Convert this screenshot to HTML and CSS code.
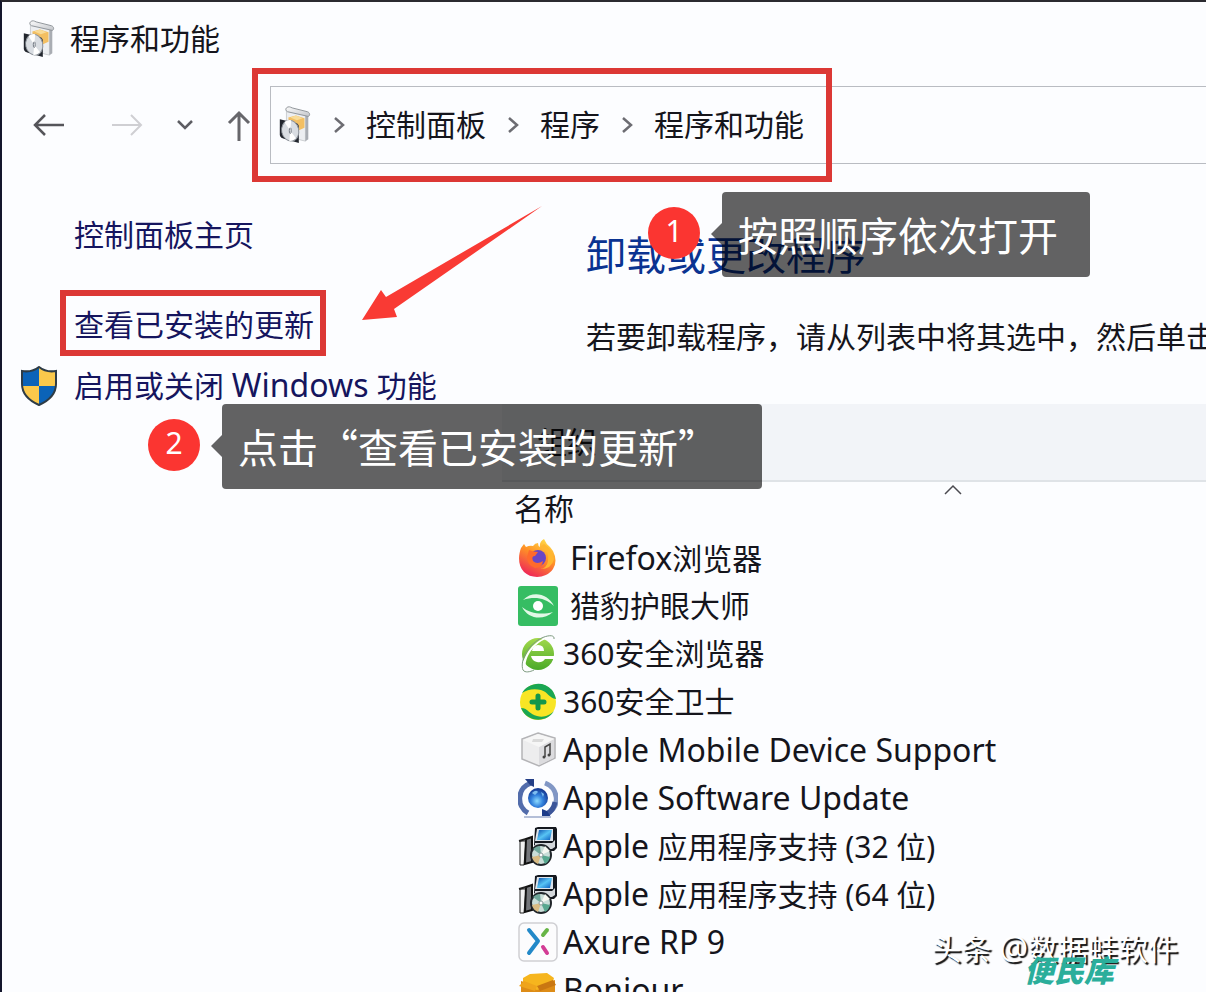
FILE: index.html
```html
<!DOCTYPE html>
<html lang="zh-CN">
<head>
    <meta charset="UTF-8">
    <meta name="viewport" content="width=device-width, initial-scale=1.0">
    <title>程序和功能</title>
    <link rel="stylesheet" href="styles.css">
</head>
<body>

    <!-- Shared icons -->
    <svg class="sprite" width="0" height="0" aria-hidden="true">
        <defs>
            <linearGradient id="paper" x1="0" y1="0" x2="1" y2="1">
                <stop offset="0" stop-color="#fafafa"/>
                <stop offset="1" stop-color="#c3c6cb"/>
            </linearGradient>
            <linearGradient id="screen" x1="0" y1="0" x2="1" y2="1">
                <stop offset="0" stop-color="#0a4fae"/>
                <stop offset="0.5" stop-color="#58c4f4"/>
                <stop offset="1" stop-color="#0a5cc0"/>
            </linearGradient>
        </defs>
        <symbol id="programs" viewBox="0 0 34 40">
            <path d="M8 4 28 8V37L8 32Z" fill="#eceef1" stroke="#c9ccd0"/>
            <path d="M28 8 31 9V35L28 37Z" fill="#a9adb3"/>
            <path d="M8 2C10 0 12 1 14 2L30 6C33 7 33 10 31 11L9 6C7 5 7 3 8 2Z" fill="url(#paper)" stroke="#8d9298"/>
            <path d="M10 12 18 10 27 13V23L20 26 11 22Z" fill="#f3bf62"/>
            <path d="M12 12 18 10 25 13 19 15Z" fill="#f9dc98"/>
            <path d="M1 14 18 18Q21 19 21 22V39L4 34Q1 33 1 30Z" fill="#22262e"/>
            <ellipse cx="12" cy="26" rx="9" ry="11" fill="#d9dde2" stroke="#8f959c" transform="rotate(-12 12 26)"/>
            <path d="M12 26 6 17Q9 14 13 15ZM12 26 18 34Q15 37 11 37Z" fill="#fff"/>
            <ellipse cx="12" cy="26" rx="1" ry="3" fill="#f4f5f6" stroke="#6d747d"/>
        </symbol>
        <symbol id="crumb-arrow" viewBox="0 0 12 18">
            <path d="M2 2 10 9 2 16" fill="none" stroke="#6c6c72" stroke-width="2.5"/>
        </symbol>
        <symbol id="installer" viewBox="0 0 40 40">
            <path d="M17 2 20 1H38L39 3V22L36 25H24L16 19Z" fill="#14181f"/>
            <path d="M19 3H35V15H17Z" fill="#dce3ea"/>
            <path d="M21 4H34L32 14H19Z" fill="url(#screen)"/>
            <path d="M17 17H34L37 14V21L34 23H17Z" fill="#d4d8dc"/>
            <path d="M2 15H8L6 39H2Z" fill="#f2f2f2" stroke="#222"/>
            <path d="M8 13 14 11V36L7 38Z" fill="#74767a" stroke="#111" stroke-width="2"/>
            <path d="M1 15 8 13" stroke="#222" stroke-width="2"/>
            <circle cx="23" cy="29" r="10" fill="#c9ddd8" stroke="#20252a" stroke-width="2"/>
            <path d="M23 29 15 23Q18 20 22 20Z" fill="#6fa79a"/>
            <path d="M23 29 32 31Q31 36 27 38Z" fill="#58a78f"/>
            <path d="M23 29 14 31Q15 36 20 38Z" fill="#d8bb83"/>
            <path d="M23 29 27 20 32 25Z" fill="#f7f8f2"/>
            <circle cx="23" cy="29" r="2" fill="#fff" stroke="#8a9a9a"/>
        </symbol>
    </svg>

    <div class="window">
        <header class="titlebar">
            <svg class="programs-icon"><use href="#programs"/></svg>
            <h1>程序和功能</h1>
        </header>

        <!-- Navigation buttons and address bar -->
        <nav class="navbar">
            <div class="nav-buttons">
                <button class="back" type="button" aria-label="后退">
                    <svg width="32" height="24" viewBox="0 0 32 24"><path d="M31 12H3M12 2 2 12 12 22" fill="none" stroke="#55555a" stroke-width="2.5"/></svg>
                </button>
                <button type="button" aria-label="前进" disabled>
                    <svg width="32" height="24" viewBox="0 0 32 24"><path d="M1 12H29M20 2 30 12 20 22" fill="none" stroke="#cfcfd3" stroke-width="2"/></svg>
                </button>
                <button type="button" aria-label="最近的位置">
                    <svg width="18" height="12" viewBox="0 0 18 12"><path d="M2 2 9 9 16 2" fill="none" stroke="#5d5d63" stroke-width="2.5"/></svg>
                </button>
                <button type="button" aria-label="上移">
                    <svg width="24" height="32" viewBox="0 0 24 32"><path d="M12 32V5M2 14 12 4 22 14" fill="none" stroke="#66666b" stroke-width="3"/></svg>
                </button>
            </div>
            <div class="address">
                <svg class="programs-icon"><use href="#programs"/></svg>
                <svg class="crumb-arrow"><use href="#crumb-arrow"/></svg>
                <a href="#">控制面板</a>
                <svg class="crumb-arrow"><use href="#crumb-arrow"/></svg>
                <a href="#">程序</a>
                <svg class="crumb-arrow"><use href="#crumb-arrow"/></svg>
                <a href="#">程序和功能</a>
            </div>
        </nav>

        <div class="content">
            <aside class="sidebar">
                <a class="home" href="#">控制面板主页</a>
                <a href="#">查看已安装的更新</a>
                <a class="with-shield" href="#">
                    <svg width="38" height="40" viewBox="0 0 38 40">
                        <path d="M19 1C24 5 30 6 36 5V18C36 28 28 35 19 39Z" fill="#fbc94b"/>
                        <path d="M19 1C14 5 8 6 2 5V18C2 28 10 35 19 39Z" fill="#0b63b8"/>
                        <path d="M2 20H19V39C10 35 3 29 2 20Z" fill="#fbc94b"/>
                        <path d="M36 20H19V39C28 35 35 29 36 20Z" fill="#0b63b8"/>
                        <path d="M19 1C24 5 30 6 36 5V18C36 28 28 35 19 39 10 35 2 28 2 18V5C8 6 14 5 19 1Z" fill="none" stroke="#2e3c46" stroke-width="2"/>
                    </svg>
                    <span>启用或关闭 <span class="latin">Windows </span>功能</span>
                </a>
            </aside>

            <main>
                <div class="intro">
                    <h2>卸载或更改程序</h2>
                    <p>若要卸载程序，请从列表中将其选中，然后单击“卸载”</p>
                </div>
                <div class="toolbar">
                    <button type="button">组织</button>
                </div>

                <table class="programs">
                    <thead>
                        <tr>
                            <th>
                                名称
                                <svg class="sort" width="20" height="11" viewBox="0 0 20 11"><path d="M2 10 10 2 18 10" fill="none" stroke="#4a4a50" stroke-width="1.5"/></svg>
                            </th>
                        </tr>
                    </thead>
                    <tbody>
                        <tr><td><div class="program spaced">
                            <svg viewBox="0 0 40 40">
                                <defs>
                                    <linearGradient id="fox" x1="0.8" y1="0" x2="0.3" y2="1">
                                        <stop offset="0" stop-color="#ffe14a"/>
                                        <stop offset="0.45" stop-color="#ff9226"/>
                                        <stop offset="1" stop-color="#ee2459"/>
                                    </linearGradient>
                                </defs>
                                <path d="M3 10 6 6 8 9Q12 7 15 8 17 5 20 5 20 8 22 9 21 4 26 1 28 6 32 9L35 13Q40 23 35 31C28 41 13 41 6 34 0 28 0 18 3 10Z" fill="url(#fox)"/>
                                <circle cx="20" cy="20" r="8" fill="#6847c7"/>
                                <path d="M11 12Q15 14 20 14L17 18Q13 18 15 23 19 27 25 23 24 30 17 30 9 27 9 19Z" fill="#ff6a2c"/>
                                <path d="M22 9Q32 13 30 23 29 30 22 31 34 31 36 21 34 11 26 6Z" fill="#ffb62f"/>
                            </svg>
                            <span><span class="latin">Firefox</span>浏览器</span>
                        </div></td></tr>
                        <tr><td><div class="program spaced">
                            <svg viewBox="0 0 40 40">
                                <rect width="40" height="40" rx="3" fill="#36bd63"/>
                                <path d="M5 14C15 4 30 8 36 20 27 12 17 10 5 14ZM4 21C10 33 25 35 35 26 25 29 12 28 4 21Z" fill="#e2f8e6"/>
                                <circle cx="20" cy="20" r="5" fill="#fff"/>
                            </svg>
                            <span>猎豹护眼大师</span>
                        </div></td></tr>
                        <tr><td><div class="program">
                            <svg viewBox="0 0 40 40">
                                <defs>
                                    <linearGradient id="leaf" x1="0" y1="0" x2="0" y2="1">
                                        <stop offset="0" stop-color="#a3d94c"/>
                                        <stop offset="1" stop-color="#4aa928"/>
                                    </linearGradient>
                                </defs>
                                <circle cx="20" cy="20" r="16" fill="url(#leaf)"/>
                                <path d="M14 17Q15 11 20 11 26 11 26 17Z" fill="#fff"/>
                                <path d="M13 22H37V25H27Q24 29 19 28 14 27 13 22Z" fill="#fff"/>
                                <path d="M36 2C24 2 7 13 4 34 4 38 6 38 8 37 5 22 18 6 36 2Z" fill="#fff"/>
                                <path d="M36 5C37 0 28 1 20 6 8 14 2 28 5 36 7 39 12 38 16 36" fill="none" stroke="#7d9a80" stroke-width="1"/>
                            </svg>
                            <span>360安全浏览器</span>
                        </div></td></tr>
                        <tr><td><div class="program">
                            <svg viewBox="0 0 40 40">
                                <circle cx="20" cy="20" r="18" fill="#f8e525"/>
                                <path d="M4 11C10 1 25-2 34 8 36 11 37 13 38 17 31 16 30 10 23 8 15 6 9 8 4 11Z" fill="#19a653"/>
                                <path d="M3 26C10 26 12 33 19 34 26 36 32 33 36 29 29 41 9 41 3 26Z" fill="#19a653"/>
                                <path d="M20 14V26M14 20H26" stroke="#12964b" stroke-width="5" stroke-linecap="round"/>
                            </svg>
                            <span>360安全卫士</span>
                        </div></td></tr>
                        <tr><td><div class="program">
                            <svg viewBox="0 0 40 40">
                                <path d="M20 3 37 8V28L21 36 4 29V9Z" fill="#ededee" stroke="#b4b4b7" stroke-width="1.5"/>
                                <path d="M21 17 36 9V28L21 35Z" fill="#dcdcdf"/>
                                <path d="M5 10 20 4 36 9 21 17Z" fill="#f6f6f6"/>
                                <path d="M15 9H26L24 12H14Z" fill="#dadada"/>
                                <path d="M27 27V17L32 14V25" fill="none" stroke="#444" stroke-width="1.5"/>
                                <circle cx="26" cy="27" r="1.5" fill="#444"/>
                                <circle cx="31" cy="25" r="1.5" fill="#444"/>
                            </svg>
                            <span class="latin">Apple Mobile Device Support</span>
                        </div></td></tr>
                        <tr><td><div class="program">
                            <svg viewBox="0 0 40 40">
                                <defs>
                                    <radialGradient id="globe" cx="0.45" cy="0.65" r="0.6">
                                        <stop offset="0" stop-color="#8ddcff"/>
                                        <stop offset="0.5" stop-color="#3180dc"/>
                                        <stop offset="1" stop-color="#163c96"/>
                                    </radialGradient>
                                </defs>
                                <path d="M13 5C-1 10-2 28 10 35" fill="none" stroke="#526cab" stroke-width="5"/>
                                <path d="M7 1H16V9L12 7Z" fill="#243f87"/>
                                <path d="M27 5C41 10 42 29 30 35" fill="none" stroke="#8197c5" stroke-width="5"/>
                                <path d="M37 24C36 30 34 33 29 36" fill="none" stroke="#3b5599" stroke-width="5"/>
                                <path d="M33 39H24V31L29 33Z" fill="#1c3c89"/>
                                <path d="M6 39H33" stroke="#b4bfd8" stroke-width="2"/>
                                <circle cx="20" cy="20" r="10" fill="url(#globe)"/>
                                <path d="M14 15Q18 11 20 14L17 17ZM23 14 26 16 25 19Z" fill="#7dbdf0"/>
                            </svg>
                            <span class="latin">Apple Software Update</span>
                        </div></td></tr>
                        <tr><td><div class="program">
                            <svg><use href="#installer"/></svg>
                            <span><span class="latin">Apple </span>应用程序支持 (32 位)</span>
                        </div></td></tr>
                        <tr><td><div class="program">
                            <svg><use href="#installer"/></svg>
                            <span><span class="latin">Apple </span>应用程序支持 (64 位)</span>
                        </div></td></tr>
                        <tr><td><div class="program">
                            <svg viewBox="0 0 40 40">
                                <rect x="1" y="1" width="38" height="38" rx="5" fill="#fcfcfd" stroke="#cfcfd3" stroke-width="1.5"/>
                                <path d="M11 8 20 19 11 31" fill="none" stroke="#2389c8" stroke-width="4" stroke-linejoin="round" stroke-linecap="round"/>
                                <path d="M29 8 25 13" stroke="#67b546" stroke-width="4" stroke-linecap="round"/>
                                <path d="M25 25 29 31" stroke="#d33c94" stroke-width="4" stroke-linecap="round"/>
                            </svg>
                            <span class="latin">Axure RP 9</span>
                        </div></td></tr>
                        <tr><td><div class="program">
                            <svg viewBox="0 0 40 40">
                                <path d="M3 11 18 16 37 10V31L19 38 3 32Z" fill="#dd8c17"/>
                                <path d="M5 8 12 4 29 3 36 8 34 15 19 20 5 14Z" fill="#f6b51e"/>
                                <path d="M1 16 6 11 19 16 17 21Z" fill="#efa41c"/>
                                <path d="M19 16 35 10 38 15 22 21Z" fill="#c97712"/>
                            </svg>
                            <span class="latin">Bonjour</span>
                        </div></td></tr>
                    </tbody>
                </table>
            </main>
        </div>

        <!-- Step annotations drawn over the window -->
        <div class="highlight highlight-address"></div>
        <div class="highlight highlight-updates"></div>
        <svg class="arrow" width="180" height="116" viewBox="0 0 180 116">
            <path d="M180 0 24 91 19 84 0 114 35 111 32 103Z" fill="#f93a34"/>
        </svg>
        <div class="step step-one">1</div>
        <div class="tip tip-one">按照顺序依次打开</div>
        <div class="step step-two">2</div>
        <div class="tip tip-two">点击“查看已安装的更新”</div>
        <div class="credit">头条 <span class="latin">@</span>数据蛙软件</div>
        <div class="stamp">便民库</div>
    </div>

</body>
</html>
```
FILE: styles.css
```css
* {
    box-sizing: border-box;
}

body {
    margin: 0;
    font-family: "Noto Sans", "Noto Sans CJK SC", sans-serif;
    font-size: 30px;
    line-height: 48px;
    color: #15151c;
    background-color: #fcfdff;
}

h1, h2, p {
    margin: 0;
    font-size: 30px;
    font-weight: normal;
}

a {
    color: inherit;
    text-decoration: none;
}

button {
    padding: 0;
    border: none;
    background: none;
    font: inherit;
    color: inherit;
}

svg {
    display: block;
    flex-shrink: 0;
}

.sprite {
    position: absolute;
}

.latin {
    font-size: 32px;
}

.window {
    position: relative;
    height: 100vh;
    overflow: hidden;
    border-top: 2px solid #2b2a30;
    border-left: 2px solid #14162c;
}

.titlebar {
    display: flex;
    align-items: center;
    gap: 14px;
    height: 74px;
    padding-left: 20px;
}

.programs-icon {
    width: 34px;
    height: 38px;
}

.navbar {
    display: flex;
    align-items: center;
    height: 97px;
}

.nav-buttons {
    display: flex;
    align-items: center;
    gap: 33px;
    width: 268px;
    padding-left: 31px;
}

.nav-buttons .back {
    margin-right: 13px;
}

.address {
    display: flex;
    flex: 1;
    align-items: center;
    gap: 20px;
    height: 78px;
    padding-left: 7px;
    border: 1px solid #b9bcc2;
    border-right: none;
    white-space: nowrap;
}

.crumb-arrow {
    width: 14px;
    height: 18px;
}

.content {
    display: flex;
    padding-top: 32px;
}

.sidebar {
    display: flex;
    flex-direction: column;
    width: 500px;
    flex-shrink: 0;
    padding-left: 72px;
    line-height: 60px;
    color: #15155e;
}

.sidebar .home {
    margin-bottom: 30px;
}

.with-shield {
    display: flex;
    align-items: center;
    gap: 16px;
    margin-left: -54px;
}

main {
    flex: 1;
    min-width: 0;
}

.intro {
    height: 199px;
    padding: 20px 0 0 84px;
    white-space: nowrap;
    overflow: hidden;
}

.intro h2 {
    margin-bottom: 28px;
    font-size: 40px;
    line-height: 60px;
    color: #0a3391;
}

.toolbar {
    display: flex;
    align-items: center;
    height: 78px;
    padding-left: 35px;
    background-color: #f2f4f8;
    border-bottom: 2px solid #dfe3e7;
}

.programs {
    width: 100%;
    margin-top: 2px;
    border-collapse: collapse;
}

.programs th, .programs td {
    padding: 0;
    text-align: left;
    font-weight: normal;
}

.programs th {
    position: relative;
    height: 50px;
    padding-left: 12px;
}

.sort {
    position: absolute;
    top: 0;
    left: 441px;
}

.program {
    display: flex;
    align-items: center;
    gap: 5px;
    height: 48px;
    padding-left: 16px;
    white-space: nowrap;
}

.program svg {
    width: 40px;
    height: 40px;
}

.program.spaced {
    gap: 12px;
}

/* Annotations */
.highlight {
    position: absolute;
    border: 6px solid #dc3835;
}

.highlight-address {
    top: 66px;
    left: 250px;
    width: 580px;
    height: 114px;
}

.highlight-updates {
    top: 288px;
    left: 58px;
    width: 266px;
    height: 66px;
}

.arrow {
    position: absolute;
    top: 204px;
    left: 360px;
}

.step {
    position: absolute;
    width: 52px;
    height: 52px;
    border-radius: 50%;
    background-color: #fb3531;
    color: #fff;
    text-align: center;
}

.step-one {
    top: 205px;
    left: 646px;
}

.step-two {
    top: 417px;
    left: 146px;
}

.tip {
    position: absolute;
    height: 85px;
    padding-left: 16px;
    border-radius: 4px;
    background-color: rgba(0, 0, 0, 0.61);
    color: #fff;
    font-family: "Noto Sans CJK SC", sans-serif;
    font-size: 40px;
    line-height: 85px;
    white-space: nowrap;
}

.tip::before {
    content: "";
    position: absolute;
    top: 31px;
    right: 100%;
    border: 11px solid transparent;
    border-left: none;
    border-right-color: rgba(0, 0, 0, 0.61);
}

.tip-one {
    top: 190px;
    left: 720px;
    width: 368px;
}

.tip-two {
    top: 402px;
    left: 220px;
    width: 540px;
}

.credit {
    position: absolute;
    right: 28px;
    bottom: 19px;
    color: #fff;
    text-shadow: 2px 2px 1px #111;
}

.stamp {
    position: absolute;
    right: 92px;
    bottom: -3px;
    color: #2bae9b;
    font-style: italic;
    font-weight: 900;
}
```
